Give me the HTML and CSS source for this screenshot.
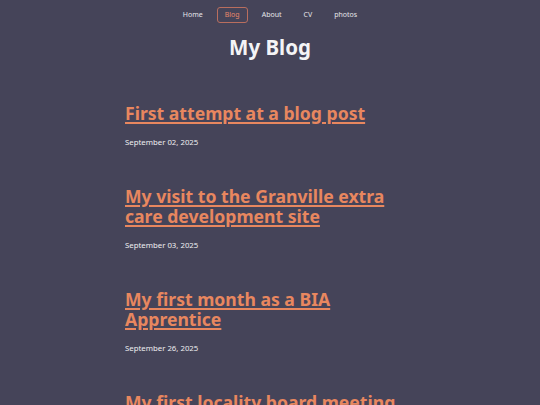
FILE: index.html
```html
<!DOCTYPE html>
<html lang="en">
<head>
<meta charset="utf-8">
<title>My Blog</title>
<link rel="stylesheet" href="styles.css">
</head>
<body>
<nav class="nav">
  <a class="nav-link" href="#">Home</a>
  <a class="nav-link active" href="#">Blog</a>
  <a class="nav-link" href="#">About</a>
  <a class="nav-link" href="#">CV</a>
  <a class="nav-link" href="#">photos</a>
</nav>
<h1 class="page-title">My Blog</h1>
<main class="posts">
  <article class="post">
    <h2 class="post-title"><a href="#">First attempt at a blog post</a></h2>
    <p class="post-date">September 02, 2025</p>
  </article>
  <article class="post">
    <h2 class="post-title"><a href="#">My visit to the Granville extra care development site</a></h2>
    <p class="post-date">September 03, 2025</p>
  </article>
  <article class="post">
    <h2 class="post-title"><a href="#">My first month as a BIA Apprentice</a></h2>
    <p class="post-date">September 26, 2025</p>
  </article>
  <article class="post">
    <h2 class="post-title"><a href="#">My first locality board meeting</a></h2>
    <p class="post-date">October 2025</p>
  </article>
</main>
</body>
</html>
```
FILE: styles.css
```css
html, body {
  margin: 0;
  padding: 0;
}

body {
  background: #454459;
  color: #f2f2f4;
  font-family: "Noto Sans", "Open Sans", sans-serif;
}

.nav {
  display: flex;
  justify-content: center;
  gap: 6px;
  padding-top: 7px;
}

.nav-link {
  color: #e6e6ea;
  text-decoration: none;
  font-size: 7px;
  line-height: 10px;
  padding: 2px 7px;
  border: 1px solid transparent;
  border-radius: 3px;
}

.nav-link.active {
  color: #e8876a;
  border-color: #b96e5e;
}

.page-title {
  margin: 11px 0 0;
  text-align: center;
  font-size: 20.5px;
  line-height: 26px;
  font-weight: 700;
  color: #f4f4f6;
}

.posts {
  width: 290px;
  margin: 0 auto;
  padding-top: 43px;
}

.post {
  margin-bottom: 39px;
}

.post-title {
  margin: 0;
  font-size: 17.6px;
  line-height: 20px;
  font-weight: 700;
}

.post-title a {
  color: #e8875f;
  text-decoration: underline;
  text-decoration-thickness: 2px;
  text-underline-offset: 2px;
}

.post-date {
  margin: 14px 0 0;
  font-size: 7.8px;
  line-height: 10px;
  color: #eeeef0;
}
```
